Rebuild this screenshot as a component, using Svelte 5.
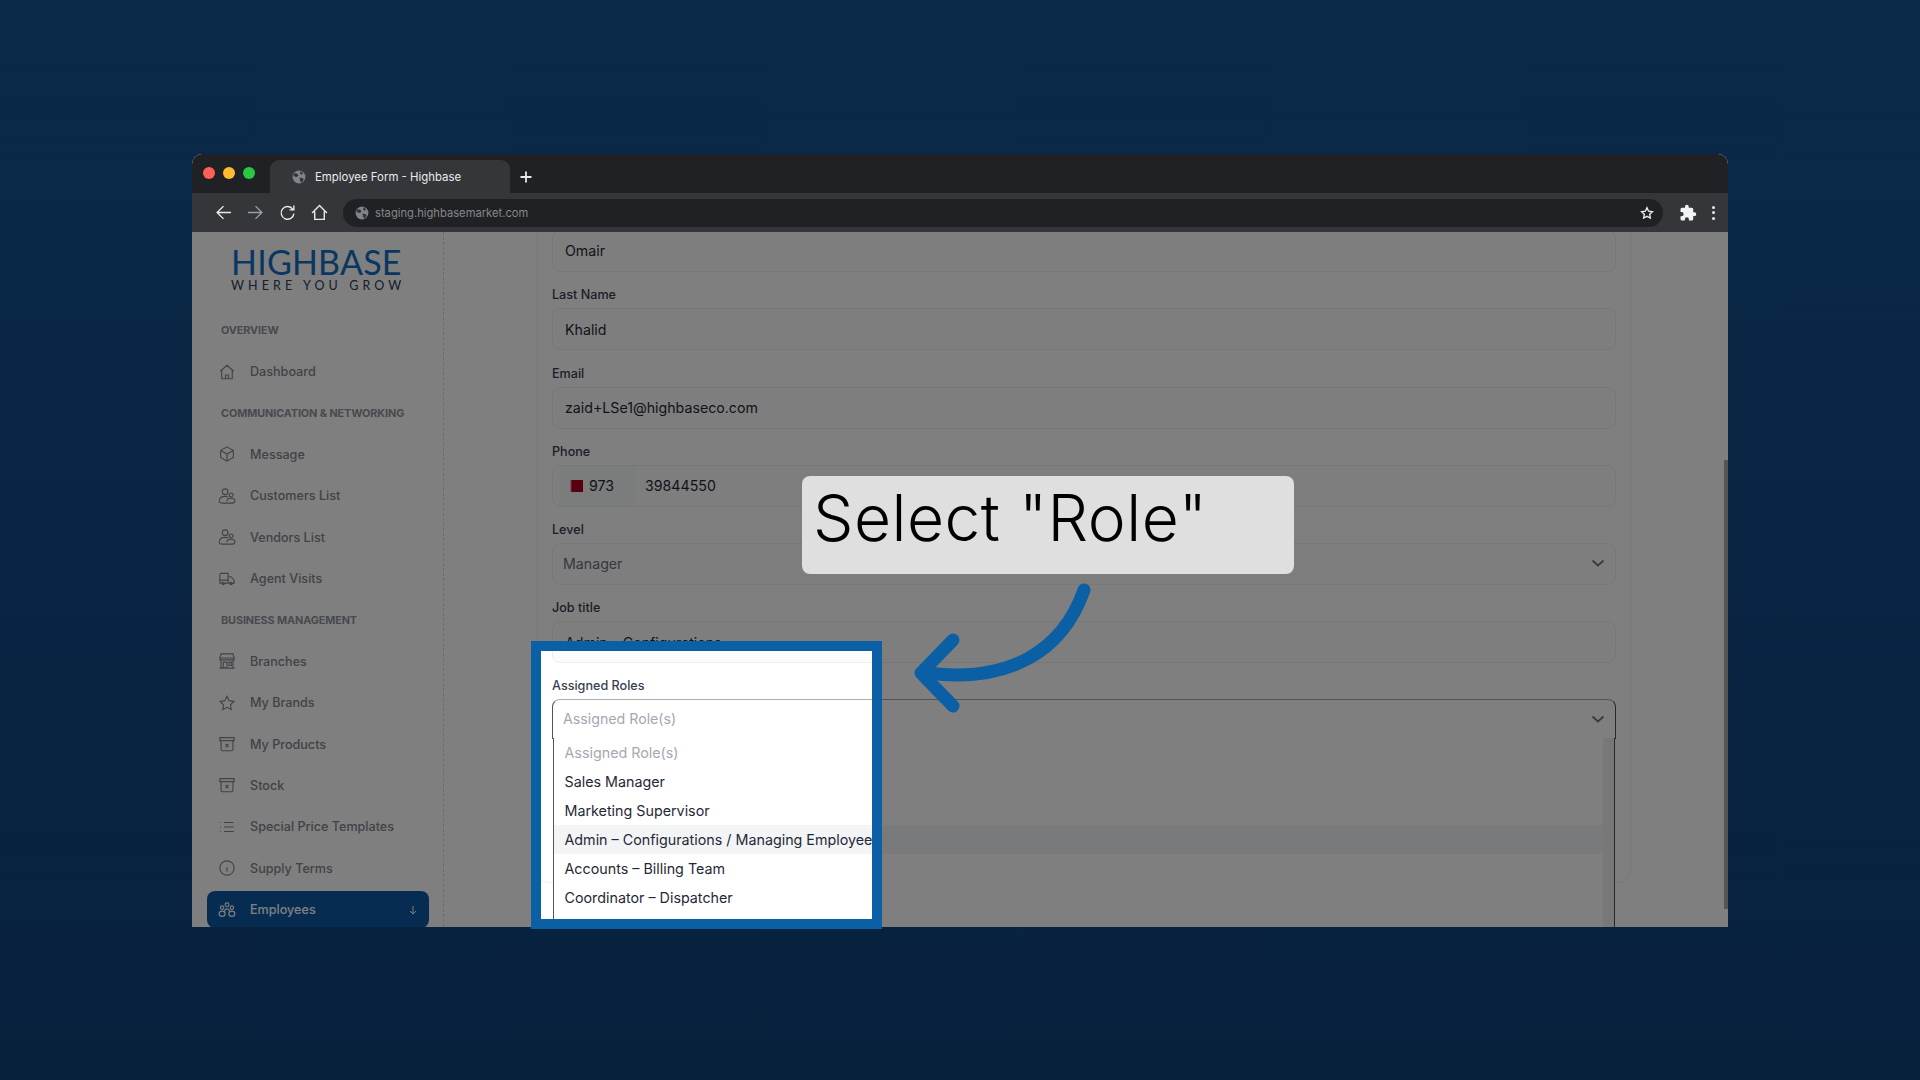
<script lang="ts">
	const icons: Record<string, string> = {
		home: 'M3 11l9-8 9 8M5 9.5V21h14V9.5M10 21v-5h4v5',
		box: 'M12 2.5l8.5 4.8v9.4L12 21.5l-8.5-4.8V7.3zM3.5 7.3L12 12l8.5-4.7M12 12v9.5',
		users: 'M9.500 2.500a3.800 3.800 0 1 1 0 7.600 3.800 3.800 0 0 1 0-7.600zM17.500 8a2.600 2.600 0 1 1 0 5.200 2.600 2.600 0 0 1 0-5.200zM2 18c0-3.500 3-5.500 7-5.500 1.800 0 3.300.4 4.500 1.100M6 21.500c-2.500 0-4.500-1-4.500-3.300M6 21.500h12c2.700 0 4.500-1 4.500-3s-2.200-3.500-5-3.500c-3 0-5.500 1.500-6 4',
		truck: 'M2.500 17.500V6a1.500 1.500 0 0 1 1.500-1.500h9.500V17.500zM13.500 9h4l4 4.500v4h-8M2.500 13.500h11M7 19.500a1.500 1.500 0 1 0 0-3 1.500 1.500 0 0 0 0 3zM17.500 19.500a1.500 1.500 0 1 0 0-3 1.500 1.500 0 0 0 0 3z',
		store: 'M4 2.500h16l1.500 5.500h-19zM2.500 8h19v2.500h-19zM4 10.500V21M20 10.500V21M2 21.500h20M7 13.500h5V21H7zM14.500 13.500H18V18h-3.500z',
		star: 'M12 3l2.800 5.900 6.400.9-4.600 4.500 1.100 6.400L12 17.700l-5.700 3 1.100-6.400-4.600-4.500 6.400-.9z',
		archive: 'M2.500 3.500h19v4h-19zM4 7.500V19a2 2 0 0 0 2 2h12a2 2 0 0 0 2-2V7.500M10 12l4 4M14 12l-4 4',
		list: 'M8 6h13M8 12h13M8 18h13M3 6h1M3 12h1M3 18h1',
		info: 'M12 2.500a9.500 9.500 0 1 1 0 19 9.500 9.500 0 0 1 0-19zM12 11v6M12 7.500v.5',
		team: 'M12 2.500a2.500 2.500 0 1 1 0 5 2.500 2.500 0 0 1 0-5zM5.500 6.500a2.300 2.300 0 1 1 0 4.600 2.300 2.300 0 0 1 0-4.600zM18.500 6.500a2.300 2.300 0 1 1 0 4.600 2.300 2.300 0 0 1 0-4.600zM8.500 16c0-3 1.500-5.500 3.500-5.500s3.500 2.500 3.500 5.500M1.500 17c0-2 1.500-3.500 4-3.500s4 1.500 4 3.500-1.500 3.500-4 3.500-4-1.500-4-3.500zM14.500 17c0-2 1.500-3.500 4-3.500s4 1.500 4 3.500-1.500 3.500-4 3.500-4-1.500-4-3.500z'
	};

	const nav = [
		{ heading: 'Overview' },
		{ label: 'Dashboard', icon: 'home' },
		{ heading: 'Communication & Networking' },
		{ label: 'Message', icon: 'box' },
		{ label: 'Customers List', icon: 'users' },
		{ label: 'Vendors List', icon: 'users' },
		{ label: 'Agent Visits', icon: 'truck' },
		{ heading: 'Business Management' },
		{ label: 'Branches', icon: 'store' },
		{ label: 'My Brands', icon: 'star' },
		{ label: 'My Products', icon: 'archive' },
		{ label: 'Stock', icon: 'archive' },
		{ label: 'Special Price Templates', icon: 'list' },
		{ label: 'Supply Terms', icon: 'info' },
		{ label: 'Employees', icon: 'team', active: true }
	];

	const roles = [
		'Sales Manager',
		'Marketing Supervisor',
		'Admin – Configurations / Managing Employees',
		'Accounts – Billing Team',
		'Coordinator – Dispatcher'
	];
</script>

{#snippet globe(size)}
	<svg width={size} height={size} viewBox="0 0 24 24">
		<circle cx="12" cy="12" r="11" fill="#80858b" />
		<path d="M5 5l5 2 1 3-3 2-4-1-2-2zM14 2l5 3-2 3-3-1zM13 13l6 1 1 3-4 5-2-3z" fill="#35363a" />
	</svg>
{/snippet}

<div class="stage">
	<div class="window">
		<div class="tabbar">
			<div class="lights">
				<span class="light red"></span>
				<span class="light yellow"></span>
				<span class="light green"></span>
			</div>
			<div class="tab">
				{@render globe(14)}
				<span>Employee Form - Highbase</span>
			</div>
			<svg class="plus" width="14" height="14" viewBox="0 0 14 14">
				<path d="M7 1.500v11M1.500 7h11" stroke="#e8eaed" stroke-width="1.800" />
			</svg>
		</div>

		<div class="toolbar">
			<div class="nav-buttons">
				<svg width="17" height="17" viewBox="0 0 16 16" fill="none" stroke="#e8eaed" stroke-width="1.300">
					<path d="M15 8H2M8 2L2 8l6 6" />
				</svg>
				<svg width="17" height="17" viewBox="0 0 16 16" fill="none" stroke="#9aa0a6" stroke-width="1.300">
					<path d="M1 8h13M8 2l6 6-6 6" />
				</svg>
				<svg width="17" height="17" viewBox="0 0 16 16" fill="none" stroke="#e8eaed" stroke-width="1.300">
					<path d="M13 5a6 6 0 1 0 1 4M14 1.500V5.500h-4" />
				</svg>
				<svg width="17" height="17" viewBox="0 0 16 16" fill="none" stroke="#e8eaed" stroke-width="1.300">
					<path d="M1 8.500L8 1.500l7 7M3.500 7v7.500h9V7" />
				</svg>
			</div>
			<div class="urlbar">
				{@render globe(14)}
				<span class="url">staging.highbasemarket.com</span>
				<svg class="url-star" width="14" height="14" viewBox="0 0 24 24" fill="none" stroke="#e8eaed" stroke-width="2.400">
					<path d={icons.star} />
				</svg>
			</div>
			<svg class="puzzle" width="18" height="18" viewBox="0 0 24 24" fill="#f1f3f4">
				<path d="M20.500 11H19V7a2 2 0 0 0-2-2h-4V3.500a2.500 2.500 0 0 0-5 0V5H4a2 2 0 0 0-2 2v3.800h1.500a2.700 2.700 0 0 1 0 5.400H2V20a2 2 0 0 0 2 2h3.800v-1.500a2.700 2.700 0 0 1 5.400 0V22H17a2 2 0 0 0 2-2v-4h1.500a2.500 2.500 0 0 0 0-5z" />
			</svg>
			<div class="dots"><i></i><i></i><i></i></div>
		</div>

		<div class="content">
			<aside class="sidebar">
				<div class="logo">
					<div class="logo-name">HIGHBASE</div>
					<div class="logo-tag">WHERE YOU GROW</div>
				</div>
				{#each nav as item}
					{#if item.heading}
						<div class="nav-row nav-heading">{item.heading}</div>
					{:else}
						<div class="nav-row nav-item" class:active={item.active}>
							<svg width="18" height="18" viewBox="0 0 24 24" fill="none" stroke="currentColor" stroke-width="1.500">
								<path d={icons[item.icon]} />
							</svg>
							<span>{item.label}</span>
							{#if item.active}
								<svg class="caret" width="10" height="10" viewBox="0 0 10 10" fill="none" stroke="currentColor" stroke-width="1">
									<path d="M5 1v8M2 6l3 3 3-3" />
								</svg>
							{/if}
						</div>
					{/if}
				{/each}
			</aside>

			<main class="main">
				<div class="card">
					<div class="input first">Omair</div>
					<div class="label">Last Name</div>
					<div class="input">Khalid</div>
					<div class="label">Email</div>
					<div class="input">zaid+LSe1@highbaseco.com</div>
					<div class="label">Phone</div>
					<div class="input phone">
						<div class="country">
							<svg width="13" height="12" viewBox="0 0 13 12">
								<path d="M0 0h13v12H0l2-1-2-1 2-1-2-1 2-1-2-1 2-1-2-1 2-1-2-1 2-1z" fill="#b00020" />
							</svg>
							<span>973</span>
						</div>
						<span>39844550</span>
					</div>
					<div class="label">Level</div>
					<div class="input select muted">
						<span>Manager</span>
						<svg width="14" height="14" viewBox="0 0 14 14" fill="none" stroke="#6b7280" stroke-width="1.800">
							<path d="M1.500 4.500L7 9.500l5.500-5" />
						</svg>
					</div>
					<div class="label">Job title</div>
					<div class="input">Admin – Configurations</div>
					<div class="label roles-label">Assigned Roles</div>
					<div class="input select muted open">
						<span class="placeholder">Assigned Role(s)</span>
						<svg width="14" height="14" viewBox="0 0 14 14" fill="none" stroke="#6b7280" stroke-width="1.800">
							<path d="M1.500 4.500L7 9.500l5.500-5" />
						</svg>
					</div>
				</div>

				<div class="dropdown">
					<div class="options">
						<div class="option placeholder">Assigned Role(s)</div>
						{#each roles as role, i}
							<div class="option" class:hover={i === 2}>{role}</div>
						{/each}
					</div>
					<div class="list-scroll"></div>
				</div>
			</main>

			<div class="page-scroll"></div>
			<div class="spotlight"></div>
		</div>
	</div>

	<div class="frame"></div>
	<div class="callout">Select "Role"</div>
	<svg class="arrow" width="190" height="130" viewBox="0 0 190 130" fill="none" stroke="#0b5fa5" stroke-width="13" stroke-linecap="round" stroke-linejoin="round">
		<path d="M172 7C150 70 95 100 16 90" />
		<path d="M41 57L9 90l32 33" />
	</svg>
</div>

<style>
	:global(body) {
		margin: 0;
		background: #0a2747;
	}

	.stage {
		position: relative;
		box-sizing: border-box;
		width: 1920px;
		height: 1080px;
		padding: 154px 192px 153px;
		background: linear-gradient(180deg, #0a2949 0%, #07213d 100%);
		font-family: Inter, 'Liberation Sans', sans-serif;
		overflow: hidden;
	}

	.window {
		display: flex;
		flex-direction: column;
		height: 100%;
		border-radius: 10px 10px 0 0;
		overflow: hidden;
		background: #fff;
	}

	.tabbar {
		display: flex;
		align-items: flex-end;
		flex: 0 0 39px;
		background: #202124;
	}

	.lights {
		display: flex;
		gap: 8px;
		align-self: flex-start;
		width: 78px;
		padding: 13px 0 0 11px;
		box-sizing: border-box;
	}

	.light {
		width: 12px;
		height: 12px;
		border-radius: 50%;
	}

	.red { background: #ff5f57; }
	.yellow { background: #febc2e; }
	.green { background: #28c840; }

	.tab {
		display: flex;
		align-items: center;
		gap: 9px;
		box-sizing: border-box;
		width: 240px;
		height: 33px;
		padding-left: 22px;
		border-radius: 9px 9px 0 0;
		background: #35363a;
		color: #e8eaed;
		font-size: 11.4px;
	}

	.plus {
		align-self: center;
		margin: 7px 0 0 9px;
	}

	.toolbar {
		display: flex;
		align-items: center;
		flex: 0 0 39px;
		padding-right: 13px;
		background: #35363a;
	}

	.nav-buttons {
		display: flex;
		flex: 0 0 auto;
		gap: 15px;
		padding-left: 23px;
	}

	.urlbar {
		display: flex;
		align-items: center;
		flex: 1;
		gap: 6px;
		height: 28px;
		margin: 1px 0 0 15px;
		padding: 0 9px 0 12px;
		border-radius: 14px;
		background: #202124;
	}

	.url {
		flex: 1;
		color: #85878b;
		font-size: 11.2px;
	}

	.puzzle {
		margin-left: 16px;
	}

	.dots {
		display: flex;
		flex-direction: column;
		gap: 2.500px;
		margin-left: 15px;
	}

	.dots i {
		width: 3px;
		height: 3px;
		border-radius: 50%;
		background: #e8eaed;
	}

	.content {
		position: relative;
		display: flex;
		flex: 1;
		min-height: 0;
		overflow: hidden;
		background: #fff;
	}

	.sidebar {
		flex: 0 0 252px;
		box-sizing: border-box;
		border-right: 1px dashed #d8dadd;
	}

	.logo {
		box-sizing: border-box;
		height: 77.500px;
		padding: 17.500px 0 0 39px;
	}

	.logo-name {
		font-family: Lato, sans-serif;
		font-size: 34px;
		font-weight: 400;
		line-height: 24px;
		letter-spacing: 0.2px;
		color: #136fc4;
	}

	.logo-tag {
		margin-top: 6.500px;
		font-family: Lato, sans-serif;
		font-size: 12.5px;
		font-weight: 400;
		line-height: 12px;
		letter-spacing: 4.1px;
		color: #27405c;
	}

	.nav-row {
		display: flex;
		align-items: center;
		height: 41.400px;
	}

	.nav-heading {
		padding-left: 29px;
		color: #8e949d;
		font-size: 10.850px;
		font-weight: 700;
		letter-spacing: -0.1px;
		text-transform: uppercase;
	}

	.nav-item {
		position: relative;
		gap: 14px;
		padding-left: 26px;
		color: #80868f;
		font-size: 12.6px;
		font-weight: 500;
	}

	.nav-item.active {
		height: 37px;
		margin: 2.500px 0 0 15px;
		width: 222px;
		padding-left: 11px;
		box-sizing: border-box;
		border-radius: 8px;
		background: #0c58a4;
		color: #fff;
	}

	.caret {
		position: absolute;
		right: 11px;
		top: 14px;
	}

	.main {
		position: relative;
		flex: 1;
		min-width: 0;
		padding: 0 97px 0 93px;
	}

	.card {
		margin-top: -10px;
		padding: 6px 14px 0;
		border: 1px solid #f0f0f0;
		border-radius: 0 0 12px 12px;
		height: 661px;
		box-sizing: border-box;
	}

	.label {
		margin: 15.300px 0 5px;
		height: 16px;
		color: #374151;
		font-size: 12.6px;
		font-weight: 500;
		line-height: 16px;
	}

	.roles-label {
		margin: 14.500px 0 5px;
	}

	.input {
		display: flex;
		align-items: center;
		box-sizing: border-box;
		height: 42px;
		padding: 0 12px;
		border: 1px solid #eceef0;
		border-radius: 8px;
		background: #fcfcfc;
		color: #1f2937;
		font-size: 14.2px;
	}

	.first {
		height: 43px;
	}

	.phone {
		gap: 9px;
		padding-left: 8px;
	}

	.country {
		display: flex;
		align-items: center;
		gap: 6px;
		box-sizing: border-box;
		width: 75px;
		height: 100%;
		padding-left: 9px;
		background: #f7f8f8;
	}

	.select {
		justify-content: space-between;
		padding: 0 10px 2px;
	}

	.muted {
		color: #6b7280;
	}

	.open {
		height: 40px;
		padding-bottom: 0;
		border: 1px solid #4b5563;
		border-top-color: #a8abb0;
		border-radius: 8px 8px 0 0;
		background: #fff;
	}

	.placeholder {
		color: #a3a9b3;
	}

	.dropdown {
		position: absolute;
		left: 109px;
		top: 506px;
		display: flex;
		width: 1062px;
		height: 220px;
		box-sizing: border-box;
		border-left: 1px solid #555;
		border-right: 1px solid #555;
		background: #fff;
	}

	.options {
		flex: 1;
		min-width: 0;
	}

	.list-scroll {
		flex: 0 0 11px;
		background: #f1f1f1;
	}

	.option {
		box-sizing: border-box;
		height: 29px;
		padding-left: 10.500px;
		color: #1f2937;
		font-size: 14.3px;
		line-height: 29px;
		white-space: nowrap;
	}

	.option.placeholder {
		color: #a3a9b3;
	}

	.option.hover {
		background: #f3f4f6;
	}

	.page-scroll {
		position: absolute;
		right: 0;
		top: 228px;
		bottom: 18px;
		width: 4px;
		background: #aaa;
	}

	/* dims everything round the highlighted region, chrome stays as it is */
	.spotlight {
		position: absolute;
		left: 348px;
		top: 419px;
		width: 333px;
		height: 268px;
		box-shadow: 0 0 0 2000px rgba(0, 0, 0, 0.5);
	}

	.frame {
		position: absolute;
		left: 531px;
		top: 641px;
		width: 351px;
		height: 288px;
		box-sizing: border-box;
		border: 10px solid #0b5fa5;
	}

	.callout {
		position: absolute;
		left: 802px;
		top: 476px;
		box-sizing: border-box;
		width: 492px;
		height: 98px;
		padding-left: 11px;
		border-radius: 8px;
		background: #dfdfdf;
		color: #000;
		font-size: 64px;
		font-weight: 300;
		letter-spacing: 0.5px;
		line-height: 84px;
		white-space: pre;
	}

	.arrow {
		position: absolute;
		left: 912px;
		top: 583px;
	}
</style>
